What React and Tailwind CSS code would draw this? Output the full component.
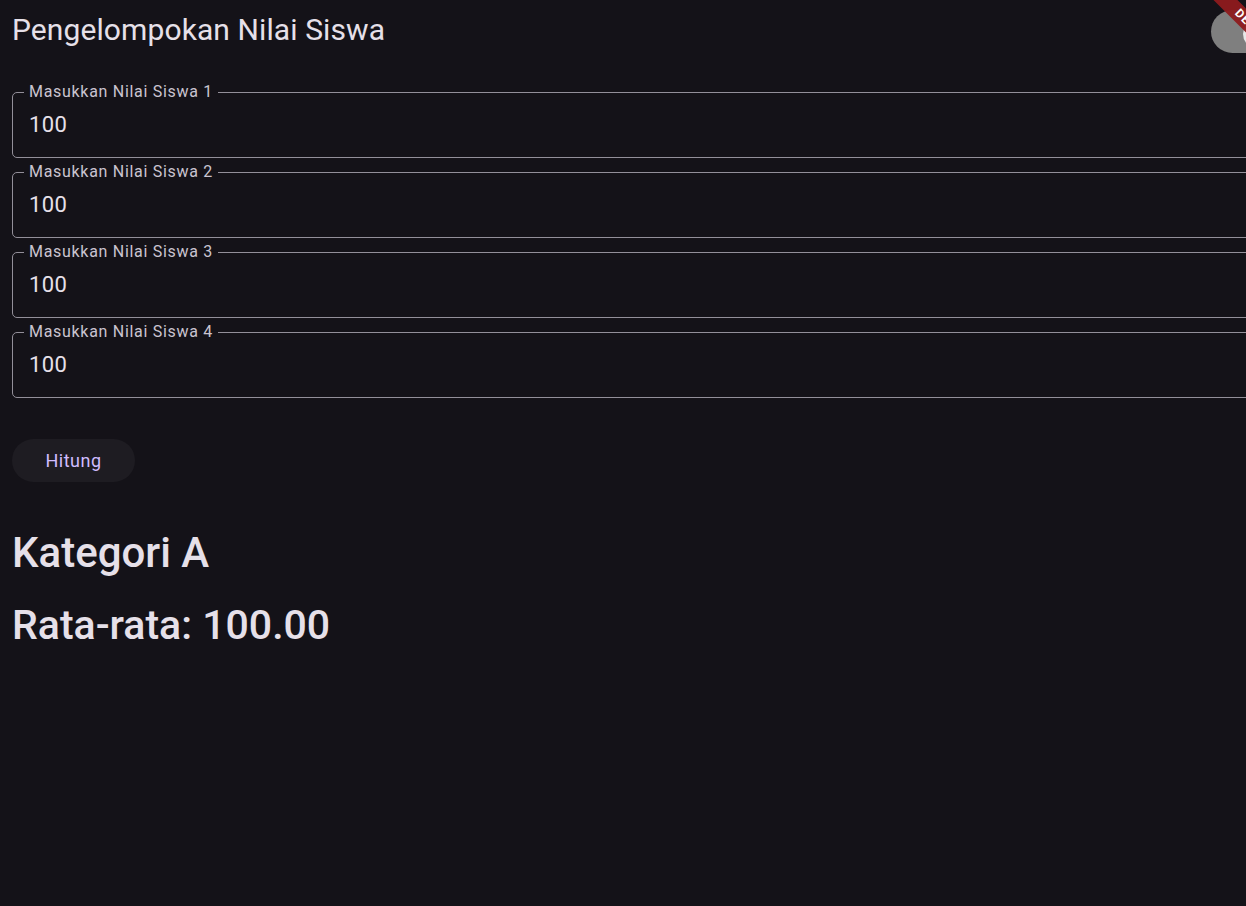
import React from "react";

const fields = [
  { label: "Masukkan Nilai Siswa 1", value: "100" },
  { label: "Masukkan Nilai Siswa 2", value: "100" },
  { label: "Masukkan Nilai Siswa 3", value: "100" },
  { label: "Masukkan Nilai Siswa 4", value: "100" },
];

const OutlinedField = ({ label, value }) => (
  <div className="relative h-[66px] w-[1260px] rounded-[5px] border border-[#938f99] flex items-center pl-[16px]">
    <span className="absolute -top-[10px] left-[11px] px-[5px] bg-[#141218] text-[16px] leading-[18px] tracking-[0.7px] text-[#cac4d0]">
      {label}
    </span>
    <span className="text-[22px] leading-[26px] tracking-[0.4px] text-[#e6e0e9]">{value}</span>
  </div>
);

const App = () => {
  return (
    <div
      className="relative w-full h-[906px] overflow-hidden bg-[#141218]"
      style={{ fontFamily: "Roboto, 'Noto Sans', sans-serif" }}
    >
      {/* theme switch, cut off at the right edge */}
      <div className="absolute left-[1211px] top-[10px] w-[80px] h-[43px] rounded-full bg-[#7f7f7f]" />
      <div className="absolute left-[1243px] top-[20px] w-[28px] h-[28px] rounded-full bg-[#e8e8e8]" />

      {/* debug banner */}
      <div className="absolute left-[1172px] top-[18px] w-[160px] h-[17px] rotate-45 bg-[#8e1b1e]/95 flex items-center justify-center">
        <span className="text-[12px] leading-[15px] font-bold text-white tracking-[1px]">DEBUG</span>
      </div>

      <div className="pl-3">
        <h1 className="pt-[12px] text-[30px] leading-[36px] tracking-[0.1px] text-[#e6e0e9]">Pengelompokan Nilai Siswa</h1>

        <div className="mt-[44px] flex flex-col gap-[14px]">
          {fields.map((f) => (
            <OutlinedField key={f.label} label={f.label} value={f.value} />
          ))}
        </div>

        <button className="mt-[41px] h-[43px] w-[123px] rounded-full bg-[#1e1c22] text-[18px] font-normal tracking-[0.5px] text-[#d0bcff]">
          Hitung
        </button>

        <div className="mt-[46px] text-[42px] leading-[50px] font-medium text-[#e6e0e9]">Kategori A</div>
        <div className="mt-[22px] text-[41px] leading-[50px] font-medium text-[#e6e0e9]">Rata-rata: 100.00</div>
      </div>
    </div>
  );
};

export default App;
